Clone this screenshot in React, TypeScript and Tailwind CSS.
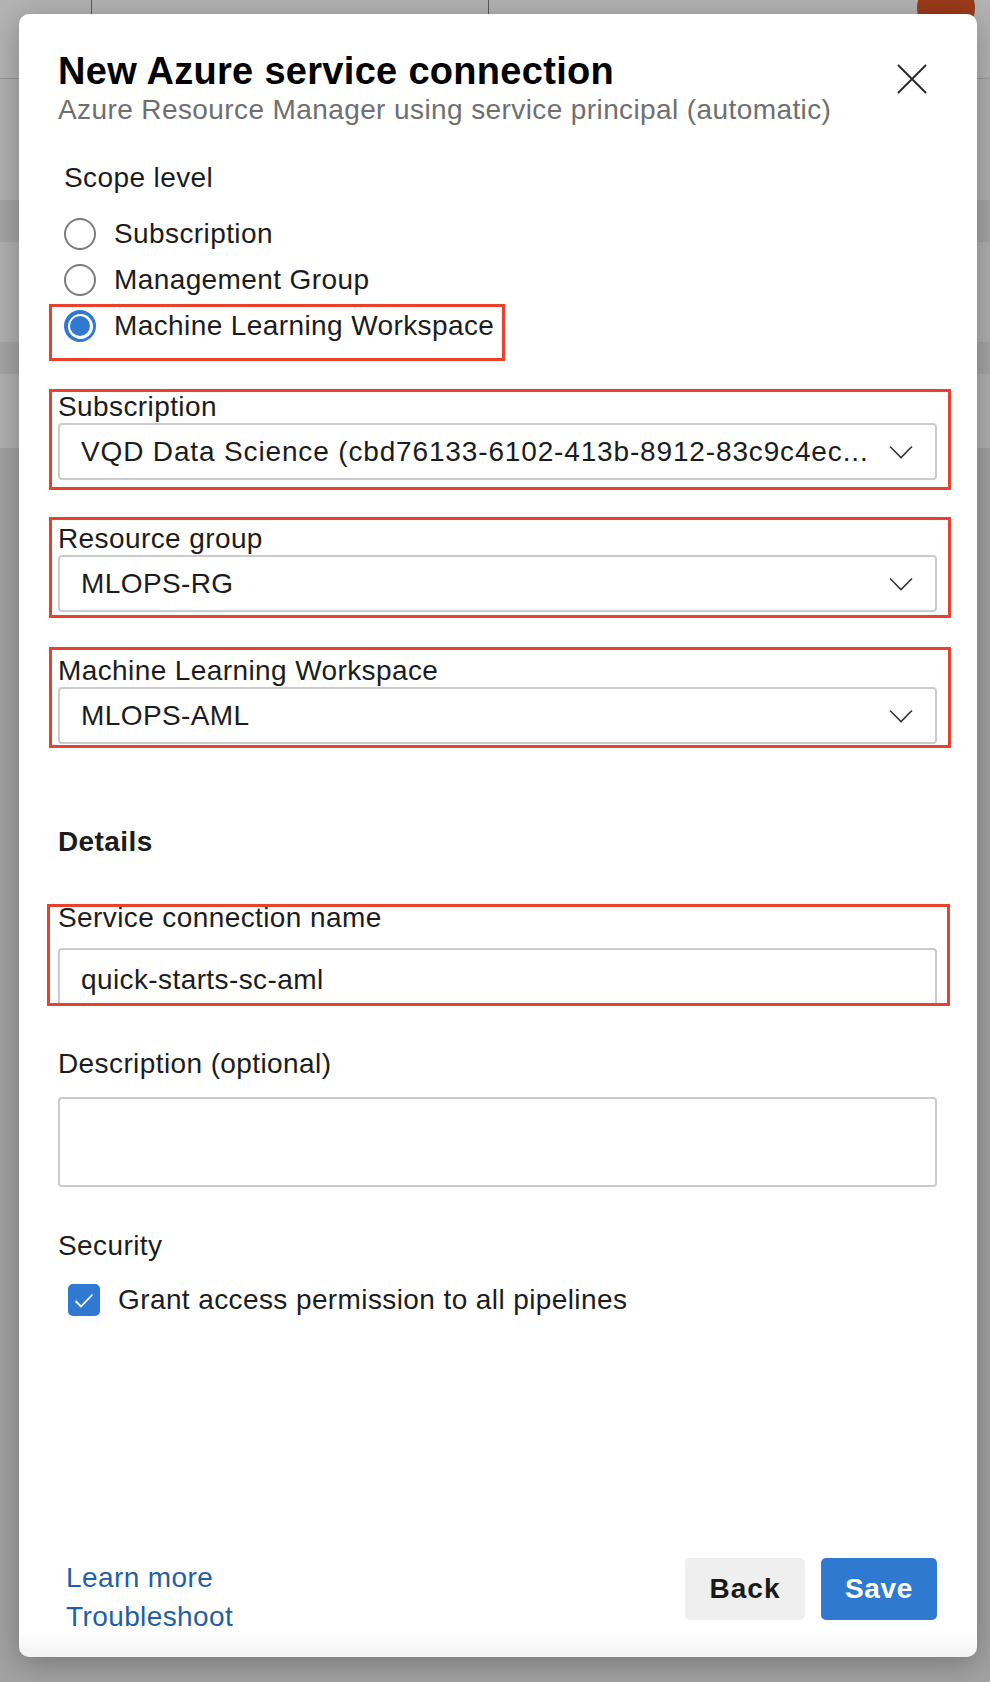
import React from 'react';

const redBox = 'pointer-events-none absolute border-[3px] border-[#e9412b]';

function Chevron() {
  return (
    <svg width="24" height="14" viewBox="0 0 24 14" fill="none">
      <path d="M1 1.5 L12 12.5 L23 1.5" stroke="#333" strokeWidth="1.6" />
    </svg>
  );
}

function CloseIcon() {
  return (
    <svg width="30" height="30" viewBox="0 0 30 30" fill="none">
      <path d="M1 1 L29 29 M29 1 L1 29" stroke="#2b2b2b" strokeWidth="2" />
    </svg>
  );
}

function Radio({ checked }: { checked?: boolean }) {
  if (checked) {
    return (
      <span className="flex h-8 w-8 shrink-0 items-center justify-center rounded-full bg-[#3079d0]">
        <span className="flex h-[25px] w-[25px] items-center justify-center rounded-full bg-white">
          <span className="h-[20px] w-[20px] rounded-full bg-[#3079d0]" />
        </span>
      </span>
    );
  }
  return <span className="h-8 w-8 shrink-0 rounded-full border-2 border-[#7b7b7b]" />;
}

function Select({ value, wide }: { value: string; wide?: boolean }) {
  return (
    <div className="flex h-[57px] items-center justify-between rounded-[4px] border-2 border-[#cbcbcb] bg-white pl-[21px] pr-[22px]">
      <span className={wide ? 'truncate whitespace-nowrap pr-2 leading-[32px] tracking-[0.85px]' : 'truncate whitespace-nowrap pr-2 leading-[32px]'}>
        {value}
      </span>
      <Chevron />
    </div>
  );
}

const App: React.FC = () => {
  const scopes = ['Subscription', 'Management Group'];

  return (
    <div className="relative h-[1682px] w-[990px] overflow-hidden bg-[#a2a2a2] font-['Liberation_Sans',Arial,sans-serif]">
      {/* page behind the overlay */}
      <div className="flex flex-col">
        <div className="flex h-[79px] items-start border-b border-[#979797] bg-[#b3b3b3]">
          <div className="-mt-[10px] ml-[91px] h-[40px] w-[398px] rounded-[5px] border border-[#5c5c5c]" />
          <div className="flex-1" />
          <div className="-mt-[21px] mr-[15px] h-[58px] w-[58px] rounded-full bg-[#9b3a1b]" />
        </div>
        <div className="h-[121px] bg-[#b0b0b0]" />
        <div className="h-[42px] bg-[#a4a4a4]" />
        <div className="h-[100px] bg-[#b0b0b0]" />
        <div className="h-[32px] bg-[#a4a4a4]" />
        <div className="h-[74px] bg-[#b0b0b0]" />
      </div>

      {/* dialog */}
      <div className="absolute left-[19px] top-[14px] flex h-[1643px] w-[958px] flex-col rounded-[10px] bg-[linear-gradient(to_bottom,#ffffff_98.3%,#f3f3f3)] pb-[21px] pl-[39px] pr-[40px] pt-[35px] text-[28px] tracking-[0.4px] text-[#1c1c1c] shadow-[0_6px_30px_rgba(0,0,0,0.28)]">
        <div className="flex items-start justify-between">
          <div>
            <h1 className="text-[38px] font-bold leading-[44px] tracking-[0.3px] text-black">New Azure service connection</h1>
            <p className="mt-px leading-[32px] text-[#6f6f6f]">
              Azure Resource Manager using service principal (automatic)
            </p>
          </div>
          <button className="mr-[10px] mt-[15px]">
            <CloseIcon />
          </button>
        </div>

        <div className="mt-[36px] pl-[6px]">
          <div className="leading-[32px]">Scope level</div>
          <div className="mt-[17px] flex flex-col">
            {scopes.map((s) => (
              <label key={s} className="flex h-[46px] items-center gap-[18px]">
                <Radio />
                <span>{s}</span>
              </label>
            ))}
            <label className="relative flex h-[46px] items-center gap-[18px]">
              <Radio checked />
              <span>Machine Learning Workspace</span>
              <span className={`${redBox} -left-[15px] top-[1px] h-[57px] w-[456px]`} />
            </label>
          </div>
        </div>

        <div className="relative mt-[42px]">
          <div className="leading-[32px]">Subscription</div>
          <Select wide value="VQD Data Science (cbd76133-6102-413b-8912-83c9c4ec..." />
          <span className={`${redBox} -bottom-[10px] -left-[9px] -right-[14px] -top-[2px]`} />
        </div>

        <div className="relative mt-[43px]">
          <div className="leading-[32px]">Resource group</div>
          <Select value="MLOPS-RG" />
          <span className={`${redBox} -bottom-[6px] -left-[9px] -right-[14px] -top-[6px]`} />
        </div>

        <div className="relative mt-[43px]">
          <div className="leading-[32px]">Machine Learning Workspace</div>
          <Select value="MLOPS-AML" />
          <span className={`${redBox} -bottom-[4px] -left-[9px] -right-[14px] -top-[8px]`} />
        </div>

        <div className="mt-[82px] font-bold leading-[32px]">Details</div>

        <div className="relative mt-[44px]">
          <div className="leading-[32px]">Service connection name</div>
          <div className="mt-[14px] flex h-[58px] items-center rounded-t-[4px] border-2 border-b-0 border-[#cbcbcb] pl-[21px] pt-[4px]">
            quick-starts-sc-aml
          </div>
          <span className={`${redBox} -left-[11px] -right-[13px] bottom-0 top-[2px]`} />
        </div>

        <div className="mt-[42px] leading-[32px]">Description (optional)</div>
        <div className="mt-[17px] h-[90px] rounded-[4px] border-2 border-[#cbcbcb]" />

        <div className="mt-[43px] leading-[32px]">Security</div>
        <label className="ml-[10px] mt-[22px] flex h-8 items-center gap-[18px]">
          <span className="flex h-8 w-8 items-center justify-center rounded-[5px] bg-[#3079d0]">
            <svg width="32" height="32" viewBox="0 0 32 32" fill="none">
              <path d="M7.5 17 L13 22.5 L24.5 10.5" stroke="#fff" strokeWidth="1.8" />
            </svg>
          </span>
          <span>Grant access permission to all pipelines</span>
        </label>

        <div className="mt-auto flex items-start justify-between">
          <div className="ml-[8px] flex flex-col leading-[39px] text-[#1f5fa6]">
            <a>Learn more</a>
            <a>Troubleshoot</a>
          </div>
          <div className="flex gap-[16px]">
            <button className="h-[62px] w-[120px] rounded-[5px] bg-[#efefef] font-bold tracking-[1px] text-[#1a1a1a]">Back</button>
            <button className="h-[62px] w-[116px] rounded-[5px] bg-[#3079d0] font-bold tracking-[0.6px] text-white">Save</button>
          </div>
        </div>
      </div>
    </div>
  );
};

export default App;
